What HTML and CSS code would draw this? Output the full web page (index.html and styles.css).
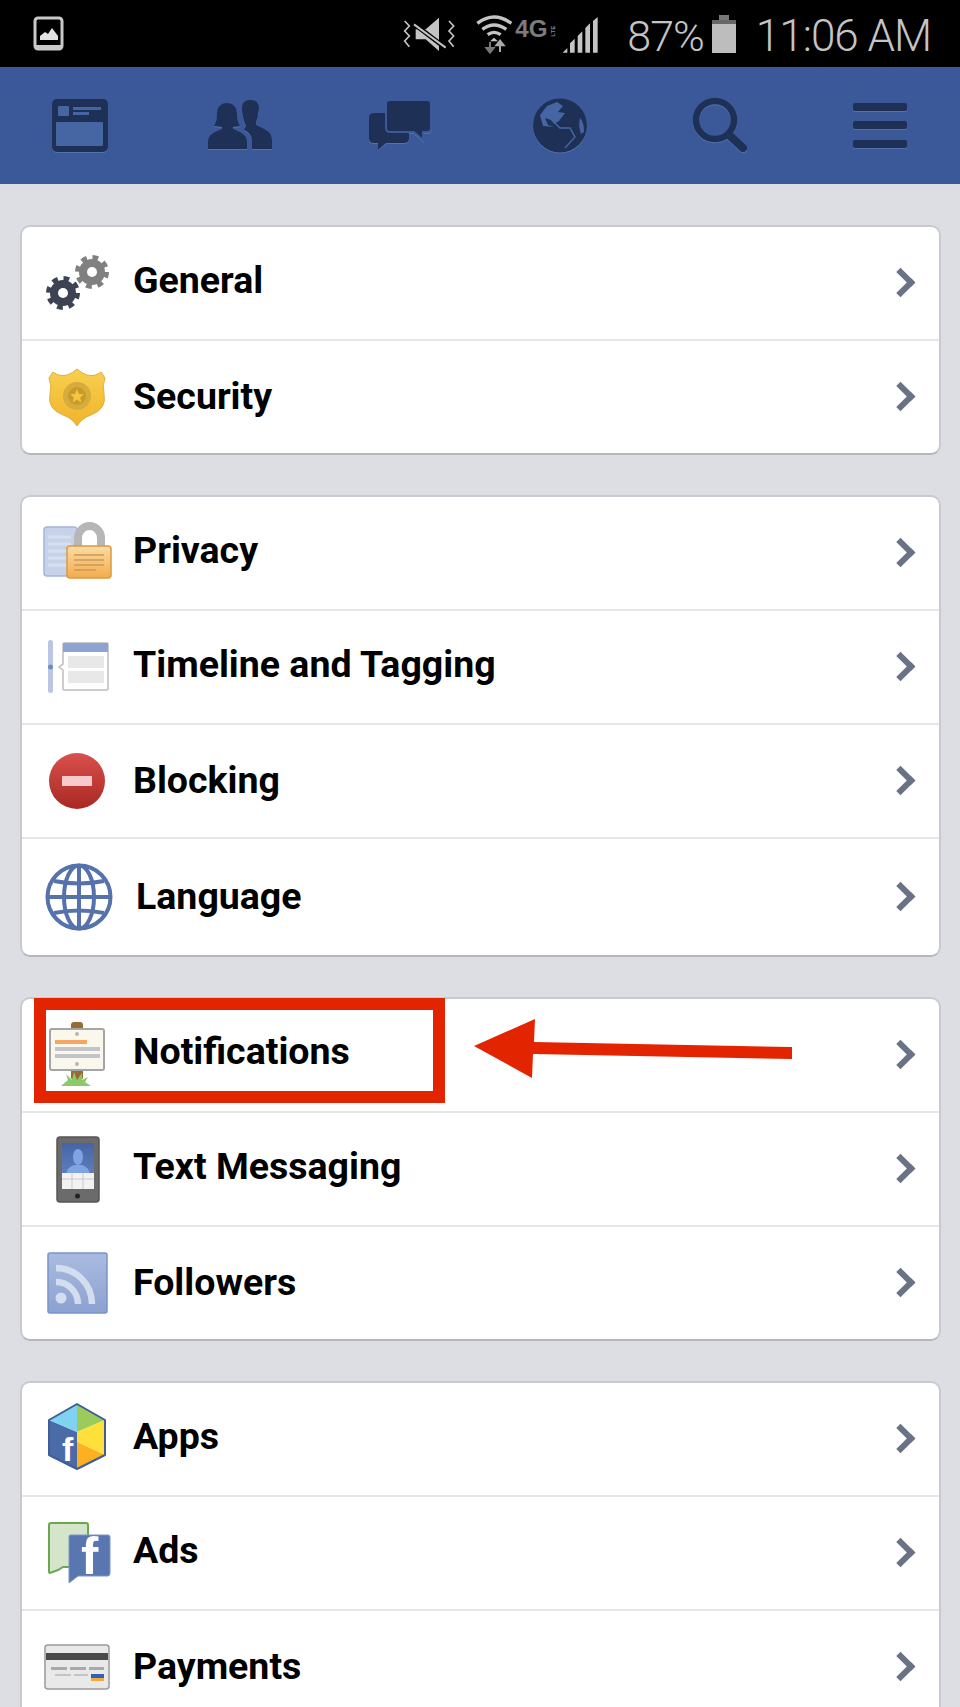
FILE: index.html
```html
<!DOCTYPE html>
<html lang="en">
<head>
  <meta charset="UTF-8">
  <meta name="viewport" content="width=device-width, initial-scale=1">
  <title>Account Settings</title>
  <link rel="stylesheet" href="styles.css">
</head>
<body>

<div class="status-bar">
  <svg class="status-photo" width="32" height="36" viewBox="0 0 32 36">
    <rect x="2" y="2" width="27" height="31" rx="3" fill="#000" stroke="#c9c9c9" stroke-width="3"/>
    <rect x="3" y="29" width="25" height="4" fill="#c9c9c9"/>
    <polygon points="7,24 7,20 12,16 15,18 19,12 25,20 25,24" fill="#e2e2e2"/>
  </svg>
  <div class="status-right">
    <svg class="status-icons" width="215" height="55" viewBox="0 0 645 165">
      <g fill="none" stroke="#c4c4c4" stroke-width="5">
        <polyline points="32,45 46,60 32,75 46,90 32,105 46,122"/>
        <polyline points="165,45 179,60 165,75 179,90 165,105 179,122"/>
      </g>
      <polygon points="65,70 95,70 135,35 135,135 95,100 65,100" fill="#c4c4c4"/>
      <line x1="55" y1="50" x2="160" y2="130" stroke="#000" stroke-width="14"/>
      <line x1="60" y1="55" x2="155" y2="125" stroke="#c4c4c4" stroke-width="6"/>
      <g fill="none" stroke="#c4c4c4" stroke-width="10">
        <path d="M250 52 Q300 14 352 52"/>
        <path d="M265 70 Q300 44 337 70"/>
        <path d="M281 86 Q300 72 320 86"/>
      </g>
      <polygon points="300,95 288,106 312,106" fill="#c4c4c4"/>
      <path d="M288 108 V128 M277 126 L288 140 L299 126 Z" fill="#777" stroke="#777" stroke-width="6"/>
      <path d="M318 138 V116 M307 118 L318 104 L329 118 Z" fill="#aaa" stroke="#aaa" stroke-width="6"/>
      <text x="364" y="92" class="status-4g" textLength="97" lengthAdjust="spacingAndGlyphs">4G</text>
      <text x="0" y="0" transform="translate(484 92) rotate(-90)" class="status-lte">LTE</text>
      <g fill="#c4c4c4">
        <polygon points="506,140 520,126 520,140"/>
        <polygon points="528,140 528,112 542,98 542,140"/>
        <polygon points="551,140 551,90 565,76 565,140"/>
        <polygon points="574,140 574,66 588,52 588,140"/>
        <polygon points="597,140 597,45 611,33 611,140"/>
      </g>
    </svg>
    <span class="status-pct">87%</span>
    <svg class="status-battery" width="26" height="38" viewBox="0 0 26 38">
      <rect x="8" y="0" width="10" height="6" fill="#777"/>
      <rect x="1" y="5" width="24" height="33" fill="#bdbdbd"/>
      <rect x="1" y="5" width="24" height="4" fill="#666"/>
    </svg>
    <span class="status-time">11:06 AM</span>
  </div>
</div>

<div class="nav-bar">
  <svg class="nav-icon" viewBox="0 0 72 64" width="72" height="64">
    <rect x="8" y="5" width="56" height="53" rx="5"/>
    <rect x="12" y="28" width="47" height="24" rx="1" class="nav-cut"/>
    <rect x="14" y="12" width="11" height="10" rx="1" class="nav-cut"/>
    <rect x="29" y="13" width="28" height="3" class="nav-cut"/>
    <rect x="29" y="18" width="16" height="3" class="nav-cut"/>
  </svg>
  <svg class="nav-icon" viewBox="0 0 72 64" width="72" height="64">
    <path d="M38 14 C38 8 42 6 46 6 C52 6 55 9 55 14 C55 18 53 20 54 23 C53 25 52 27 52 31 C60 35 68 37 68 47 V55 H48 V47 C48 42 45 38 40 36 L42 32 C40 28 38 20 38 14 Z"/>
    <path d="M13 20 C13 13 17 9 23 9 C29 9 33 13 33 20 C33 25 34 29 36 32 L29 33 V35 C36 38 43 40 43 48 V55 H4 V48 C4 40 11 38 18 35 V33 L10 32 C12 29 13 25 13 20 Z"/>
  </svg>
  <svg class="nav-icon" viewBox="0 0 72 64" width="72" height="64">
    <path d="M10 19 H40 Q45 19 45 24 V44 Q45 49 40 49 H22 L14 56 V49 H10 Q5 49 5 44 V24 Q5 19 10 19 Z"/>
    <path d="M26 6 H63 Q67 6 67 10 V34 Q67 38 63 38 H59 V46 L50 38 H26 Q22 38 22 34 V10 Q22 6 26 6 Z" stroke="#3b5998" stroke-width="2"/>
  </svg>
  <svg class="nav-icon" viewBox="0 0 72 64" width="72" height="64">
    <circle cx="36" cy="31.5" r="27"/>
    <path d="M16 21 L23 12 L33 8 L39 12 L34 18 L41 19 L35 27 L30 30 L27 26 L21 24 L24 31 L30 33 L19 32 Z" class="nav-cut"/>
    <path d="M56 24 Q60 28 60 38 L57 40 Q54 32 56 24 Z" class="nav-cut"/>
    <path d="M31 29 L36 34 L46 34 L51 43 L41 54" fill="none" stroke="#4565a3" stroke-width="1.500"/>
  </svg>
  <svg class="nav-icon" viewBox="0 0 72 64" width="72" height="64">
    <circle cx="31" cy="26" r="19" fill="none" stroke="#1e3056" stroke-width="6.5"/>
    <line x1="45" y1="41" x2="59" y2="54" stroke="#1e3056" stroke-width="8" stroke-linecap="round"/>
  </svg>
  <svg class="nav-icon" viewBox="0 0 72 64" width="72" height="64">
    <rect x="9" y="9" width="54" height="8" rx="2"/>
    <rect x="9" y="27" width="54" height="8" rx="2"/>
    <rect x="9" y="46" width="54" height="8" rx="2"/>
  </svg>
</div>

<div class="settings">

  <div class="card">
    <div class="row">
      <svg class="row-icon" viewBox="0 0 72 72" width="72" height="72">
        <circle cx="22" cy="46" r="13" fill="#3d4352"/>
        <circle cx="22" cy="46" r="14.5" fill="none" stroke="#3d4352" stroke-width="5" stroke-dasharray="5.7 5.7"/>
        <circle cx="22" cy="46" r="5" fill="#fff"/>
        <circle cx="51" cy="25" r="13" fill="#808080"/>
        <circle cx="51" cy="25" r="14.5" fill="none" stroke="#808080" stroke-width="5" stroke-dasharray="5.7 5.7"/>
        <circle cx="51" cy="25" r="5" fill="#fff"/>
      </svg>
      <span class="row-label">General</span>
    </div>
    <div class="row">
      <svg class="row-icon" viewBox="0 0 72 72" width="72" height="72">
        <defs>
          <linearGradient id="badgeFill" x1="0" y1="0" x2="0" y2="1">
            <stop offset="0" stop-color="#f8d04f"/>
            <stop offset="1" stop-color="#f2b32a"/>
          </linearGradient>
        </defs>
        <path d="M12 11 Q18 16 26 14 Q32 12 36 8 Q40 12 46 14 Q54 16 60 11 L64 17 Q61 24 63 33 Q66 48 50 54 Q41 57 36 65 Q31 57 22 54 Q6 48 9 33 Q11 24 8 17 Z" fill="url(#badgeFill)" stroke="#dcae42" stroke-width="1"/>
        <circle cx="36" cy="35" r="14" fill="#d6ad3c"/>
        <circle cx="36" cy="35" r="9" fill="#c89a2a"/>
        <polygon points="36,28 38,33 43,33.300 39.200,36.600 40.400,41.500 36,38.800 31.600,41.500 32.800,36.600 29,33.300 34,33" fill="#f3c541"/>
      </svg>
      <span class="row-label row-label-low">Security</span>
    </div>
  </div>

  <div class="card">
    <div class="row">
      <svg class="row-icon" viewBox="0 0 72 72" width="72" height="72">
        <defs>
          <linearGradient id="lockFill" x1="0" y1="0" x2="0" y2="1">
            <stop offset="0" stop-color="#fcdca4"/>
            <stop offset="1" stop-color="#f4ab4c"/>
          </linearGradient>
        </defs>
        <rect x="3" y="10" width="33" height="49" rx="3" fill="#c6d2ea" stroke="#a3b5da" stroke-width="1.5"/>
        <g stroke="#d8e0f0" stroke-width="3">
          <line x1="7" y1="20" x2="30" y2="20"/>
          <line x1="7" y1="27" x2="30" y2="27"/>
          <line x1="7" y1="34" x2="30" y2="34"/>
          <line x1="7" y1="41" x2="30" y2="41"/>
          <line x1="7" y1="48" x2="26" y2="48"/>
        </g>
        <path d="M37 30 V21 A11.500 12 0 0 1 60 21 V30" fill="none" stroke="#b6b6b6" stroke-width="8"/>
        <rect x="26" y="29" width="44" height="32" rx="3" fill="url(#lockFill)" stroke="#d89b46" stroke-width="1.500"/>
        <g stroke="#c99a58" stroke-width="1.500">
          <line x1="33" y1="38" x2="63" y2="38"/>
          <line x1="33" y1="43" x2="63" y2="43"/>
          <line x1="33" y1="48" x2="63" y2="48"/>
          <line x1="33" y1="53" x2="55" y2="53"/>
        </g>
      </svg>
      <span class="row-label">Privacy</span>
    </div>
    <div class="row">
      <svg class="row-icon" viewBox="0 0 72 72" width="72" height="72">
        <rect x="7" y="9" width="5" height="53" rx="2.500" fill="#b9c7e4"/>
        <circle cx="9.500" cy="36" r="2.500" fill="#6f8bc6"/>
        <path d="M23 12 H66 Q67 12 67 13 V58 Q67 59 66 59 H23 Q22 59 22 58 V39 L18 36 L22 33 V13 Q22 12 23 12 Z" fill="#fff" stroke="#bdbdbd" stroke-width="1.500"/>
        <rect x="22" y="12" width="45" height="9" rx="1" fill="#8fa3d3"/>
        <rect x="27" y="25" width="36" height="12" fill="#e8e8e8"/>
        <rect x="27" y="40" width="36" height="12" fill="#e8e8e8"/>
      </svg>
      <span class="row-label">Timeline and Tagging</span>
    </div>
    <div class="row">
      <svg class="row-icon" viewBox="0 0 72 72" width="72" height="72">
        <defs>
          <linearGradient id="blockFill" x1="0" y1="0" x2="0" y2="1">
            <stop offset="0" stop-color="#d9504c"/>
            <stop offset="1" stop-color="#a92822"/>
          </linearGradient>
        </defs>
        <circle cx="36" cy="36" r="28" fill="url(#blockFill)"/>
        <rect x="21" y="31" width="30" height="10" fill="#f9c8ca"/>
      </svg>
      <span class="row-label row-label-low">Blocking</span>
    </div>
    <div class="row row-tall">
      <svg class="row-icon" viewBox="0 0 72 72" width="72" height="72">
        <g fill="none" stroke="#5572ad" stroke-width="4">
          <circle cx="38" cy="36" r="31.500"/>
          <ellipse cx="38" cy="36" rx="15" ry="31.500"/>
          <line x1="38" y1="4" x2="38" y2="68"/>
          <line x1="7" y1="36" x2="69" y2="36"/>
          <path d="M13 20 Q38 25 63 20"/>
          <path d="M13 52 Q38 47 63 52"/>
        </g>
      </svg>
      <span class="row-label">Language</span>
    </div>
  </div>

  <div class="card">
    <div class="row row-note">
      <svg class="row-icon" viewBox="0 2 72 72" width="72" height="72">
        <rect x="30" y="5" width="12" height="58" rx="3" fill="#9a6a35"/>
        <path d="M20 69 L27 63 L25 57 L31 63 L33 55 L36 63 L41 56 L41 63 L47 60 L44 65 L50 69 Z" fill="#8cc96a"/>
        <rect x="9" y="12" width="54" height="41" rx="2" fill="#faf8ec" stroke="#a5a5a5" stroke-width="2"/>
        <rect x="14" y="23" width="32" height="4" fill="#f6a664"/>
        <rect x="14" y="30" width="45" height="4" fill="#c3c4c8"/>
        <rect x="14" y="37" width="45" height="4" fill="#c3c4c8"/>
        <circle cx="36" cy="17" r="2" fill="#b5b5b5"/>
        <circle cx="36" cy="47" r="2" fill="#b5b5b5"/>
      </svg>
      <span class="row-label">Notifications</span>
      <div class="callout-box"></div>
      <svg class="callout-arrow" viewBox="0 0 340 70" width="340" height="70">
        <polygon points="14,31 75,4 74,27 332,32 332,44 73,39 72,63" fill="#e32400"/>
      </svg>
    </div>
    <div class="row">
      <svg class="row-icon" viewBox="0 0 72 72" width="72" height="72">
        <defs>
          <linearGradient id="phoneFill" x1="0" y1="0" x2="0" y2="1">
            <stop offset="0" stop-color="#4464a4"/>
            <stop offset="1" stop-color="#6d8cc6"/>
          </linearGradient>
        </defs>
        <rect x="16" y="4" width="42" height="65" rx="3" fill="#6b6b6b" stroke="#565656" stroke-width="1.500"/>
        <rect x="21" y="10" width="32" height="46" fill="url(#phoneFill)"/>
        <ellipse cx="37" cy="24" rx="5" ry="8" fill="#7fa4e2"/>
        <path d="M25 42 Q26 34 33 32 H41 Q48 34 49 42 Z" fill="#7fa4e2"/>
        <rect x="21" y="40" width="32" height="16" fill="#f2f2f2"/>
        <path d="M31 40 V56 M42 40 V56 M21 46 H53" stroke="#c9c9c9" stroke-width="1"/>
        <circle cx="36.500" cy="63" r="2.500" fill="#222"/>
      </svg>
      <span class="row-label">Text Messaging</span>
    </div>
    <div class="row">
      <svg class="row-icon" viewBox="0 0 72 72" width="72" height="72">
        <defs>
          <linearGradient id="rssFill" x1="0" y1="0" x2="0" y2="1">
            <stop offset="0" stop-color="#a9bbdf"/>
            <stop offset="1" stop-color="#8ba1d0"/>
          </linearGradient>
        </defs>
        <rect x="7" y="6" width="59" height="60" rx="2" fill="url(#rssFill)" stroke="#7b94c7" stroke-width="1.500"/>
        <circle cx="20" cy="51" r="5.500" fill="#d4ddef"/>
        <path d="M15 21 A36 36 0 0 1 51 57 M15 35 A22 22 0 0 1 37 57" fill="none" stroke="#d4ddef" stroke-width="6.500"/>
      </svg>
      <span class="row-label row-label-low">Followers</span>
    </div>
  </div>

  <div class="card">
    <div class="row">
      <svg class="row-icon" viewBox="0 2 72 72" width="72" height="72">
        <polygon points="8,19 36,31 36,68 8,54" fill="#4a6aa8"/>
        <polygon points="8,19 36,3 36,31" fill="#7fd2f0"/>
        <polygon points="36,3 64,19 36,31" fill="#9ccb5b"/>
        <polygon points="36,31 64,19 64,54 36,41" fill="#ffe03a"/>
        <polygon points="36,41 64,54 36,68" fill="#fdb022"/>
        <polygon points="8,19 36,3 64,19 64,54 36,68 8,54" fill="none" stroke="#3f5d97" stroke-width="2" stroke-linejoin="round"/>
        <text x="21" y="60" class="logo-f logo-f-small">f</text>
      </svg>
      <span class="row-label">Apps</span>
    </div>
    <div class="row">
      <svg class="row-icon" viewBox="0 0 72 72" width="72" height="72">
        <path d="M10 6 H45 Q47 6 47 8 V50 H22 L17 53 L9 56 Q8 56 8 55 V8 Q8 6 10 6 Z" fill="#d5e5c9" stroke="#6aa84f" stroke-width="2"/>
        <path d="M29 18 H67 Q69 18 69 20 V56 Q69 59 67 59 H37 L28 66 V20 Q28 18 29 18 Z" fill="#5a76b0" stroke="#7e96c6" stroke-width="1"/>
        <text x="40" y="57" class="logo-f logo-f-large">f</text>
      </svg>
      <span class="row-label">Ads</span>
    </div>
    <div class="row">
      <svg class="row-icon" viewBox="0 0 72 72" width="72" height="72">
        <rect x="4" y="14" width="64" height="44" rx="3" fill="#e9e9e9" stroke="#9b9b9b" stroke-width="1.500"/>
        <rect x="5" y="22" width="62" height="7" fill="#4a4a4a"/>
        <g fill="#a9a9a9">
          <rect x="10" y="36" width="16" height="3"/>
          <rect x="29" y="36" width="16" height="3"/>
          <rect x="48" y="36" width="15" height="3"/>
        </g>
        <g fill="#c4c4c4">
          <rect x="14" y="43" width="16" height="2"/>
          <rect x="33" y="43" width="14" height="2"/>
        </g>
        <rect x="50" y="43" width="13" height="4" fill="#2f62b5"/>
        <rect x="50" y="47" width="13" height="3" fill="#f5a93c"/>
      </svg>
      <span class="row-label row-label-low">Payments</span>
    </div>
  </div>

</div>

</body>
</html>
```

FILE: styles.css
```css
html, body {
  margin: 0;
  padding: 0;
  height: 1707px;
  overflow: hidden;
}
body {
  background: #dcdee3;
  font-family: Roboto, "Liberation Sans", sans-serif;
  color: #000;
}

/* status bar */
.status-bar {
  height: 67px;
  background: #000;
  display: flex;
  align-items: center;
  justify-content: space-between;
  padding: 0 29px 0 33px;
  color: #c4c4c4;
}
.status-right {
  display: flex;
  align-items: center;
}
.status-icons {
  margin-right: 18px;
}
.status-4g {
  font-family: "Liberation Sans", sans-serif;
  font-weight: bold;
  font-size: 70px;
  fill: #7c7c7c;
}
.status-lte {
  font-family: "Liberation Sans", sans-serif;
  font-weight: bold;
  font-size: 18px;
  fill: #8a8a8a;
}
.status-pct {
  padding-top: 4px;
  font-size: 43px;
  font-weight: 300;
  letter-spacing: -1px;
  margin-right: 7px;
}
.status-battery {
  margin-right: 19px;
}
.status-time {
  padding-top: 4px;
  font-size: 44px;
  font-weight: 300;
  letter-spacing: -1px;
}

/* blue nav */
.nav-bar {
  height: 117px;
  background: #3b5998;
  display: grid;
  grid-template-columns: repeat(6, 160px);
  align-items: center;
  justify-items: center;
}
.nav-icon {
  fill: #1e3056;
  filter: drop-shadow(0 1px 0 #5272ae);
}
.nav-cut {
  fill: #4565a3;
}

/* settings list */
.settings {
  display: flex;
  flex-direction: column;
  gap: 40px;
  padding: 41px 19px 0 20px;
}
.card {
  background: #fff;
  border: 2px solid #c8cacf;
  border-bottom-color: #b5b7bb;
  border-radius: 10px;
}
.row {
  position: relative;
  height: 112px;
  display: flex;
  align-items: center;
  border-bottom: 2px solid #e5e6e9;
}
.row:last-child {
  border-bottom: none;
}
.row-tall {
  height: 116px;
}
.row::after {
  content: "";
  box-sizing: border-box;
  width: 21px;
  height: 21px;
  margin: 0 28px 2px auto;
  border-top: 6px solid #697385;
  border-right: 6px solid #697385;
  transform: rotate(45deg);
}
.row-icon {
  margin-left: 19px;
  flex-shrink: 0;
  overflow: visible;
}
.row-label {
  margin-left: 20px;
  padding-bottom: 6px;
  font-size: 37.5px;
  font-weight: 700;
}
.row .row-label-low {
  padding-bottom: 3px;
}
.row-tall .row-label {
  margin-left: 23px;
  padding-bottom: 3px;
}
.row-note .row-label {
  padding-bottom: 8px;
}
.logo-f {
  font-family: "Liberation Sans", sans-serif;
  font-weight: bold;
  fill: #fff;
}
.logo-f-small {
  font-size: 34px;
}
.logo-f-large {
  font-size: 52px;
}

/* red annotation */
.callout-box {
  position: absolute;
  box-sizing: border-box;
  left: 12px;
  top: -1px;
  width: 411px;
  height: 105px;
  border: 12px solid #e32400;
}
.callout-arrow {
  position: absolute;
  left: 438px;
  top: 16px;
}
```
